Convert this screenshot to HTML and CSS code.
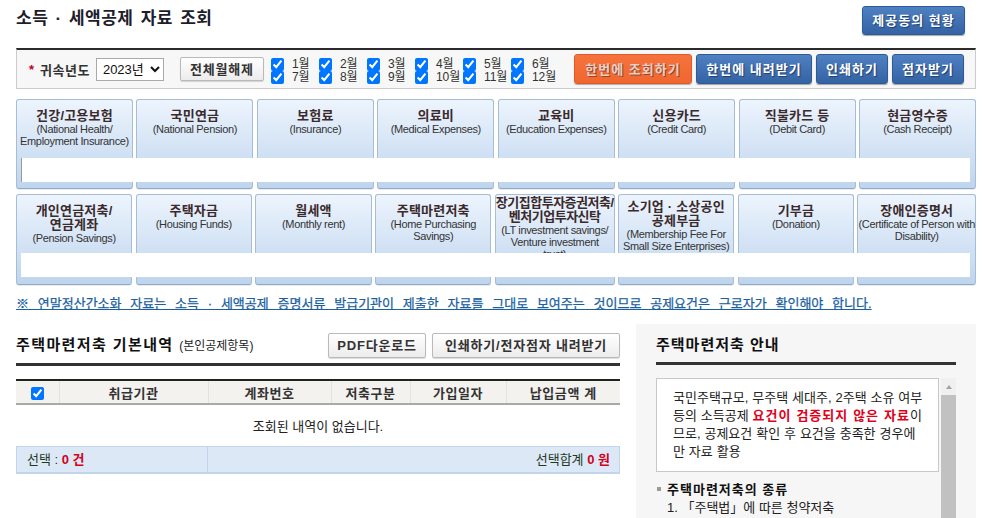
FILE: index.html
```html
<!DOCTYPE html>
<html lang="ko">
<head>
<meta charset="utf-8">
<title>소득 · 세액공제 자료 조회</title>
<link rel="stylesheet" href="styles.css">
</head>
<body>
<div class="page">
  <header class="top">
    <h1 class="title">소득 · 세액공제 자료 조회</h1>
    <button class="btn btn-blue btn-consent">제공동의 현황</button>
  </header>

  <section class="filter">
    <span class="req">*</span>
    <span class="filter-label">귀속년도</span>
    <select class="year"><option>2023년</option></select>
    <button class="btn btn-plain btn-clear">전체월해제</button>
    <div class="months">
      <label class="month"><input type="checkbox" checked><span>1월</span></label>
      <label class="month"><input type="checkbox" checked><span>2월</span></label>
      <label class="month"><input type="checkbox" checked><span>3월</span></label>
      <label class="month"><input type="checkbox" checked><span>4월</span></label>
      <label class="month"><input type="checkbox" checked><span>5월</span></label>
      <label class="month"><input type="checkbox" checked><span>6월</span></label>
      <label class="month"><input type="checkbox" checked><span>7월</span></label>
      <label class="month"><input type="checkbox" checked><span>8월</span></label>
      <label class="month"><input type="checkbox" checked><span>9월</span></label>
      <label class="month"><input type="checkbox" checked><span>10월</span></label>
      <label class="month"><input type="checkbox" checked><span>11월</span></label>
      <label class="month"><input type="checkbox" checked><span>12월</span></label>
    </div>
    <div class="actions">
      <button class="btn btn-orange w118">한번에 조회하기</button>
      <button class="btn btn-blue w116">한번에 내려받기</button>
      <button class="btn btn-blue w72">인쇄하기</button>
      <button class="btn btn-blue w72">점자받기</button>
    </div>
  </section>

  <div class="tab-row row1">
    <div class="tab"><strong>건강/고용보험</strong><span>(National Health/<br>Employment Insurance)</span></div>
    <div class="tab"><strong>국민연금</strong><span>(National Pension)</span></div>
    <div class="tab"><strong>보험료</strong><span>(Insurance)</span></div>
    <div class="tab"><strong>의료비</strong><span>(Medical Expenses)</span></div>
    <div class="tab"><strong>교육비</strong><span>(Education Expenses)</span></div>
    <div class="tab"><strong>신용카드</strong><span>(Credit Card)</span></div>
    <div class="tab"><strong>직불카드 등</strong><span>(Debit Card)</span></div>
    <div class="tab"><strong>현금영수증</strong><span>(Cash Receipt)</span></div>
    <div class="tab-bar bar-first"></div>
  </div>

  <div class="tab-row row2">
    <div class="tab"><strong>개인연금저축/<br>연금계좌</strong><span>(Pension Savings)</span></div>
    <div class="tab"><strong>주택자금</strong><span>(Housing Funds)</span></div>
    <div class="tab"><strong>월세액</strong><span>(Monthly rent)</span></div>
    <div class="tab"><strong>주택마련저축</strong><span>(Home Purchasing<br>Savings)</span></div>
    <div class="tab tab-five"><strong class="tight">장기집합투자증권저축/<br>벤처기업투자신탁</strong><span>(LT investment savings/<br>Venture investment<br>trust)</span></div>
    <div class="tab tab-four"><strong>소기업 · 소상공인<br>공제부금</strong><span>(Membership Fee For<br>Small Size Enterprises)</span></div>
    <div class="tab"><strong>기부금</strong><span>(Donation)</span></div>
    <div class="tab"><strong>장애인증명서</strong><span>(Certificate of Person with<br>Disability)</span></div>
    <div class="tab-bar"></div>
  </div>

  <p class="notice"><a href="#">※ 연말정산간소화 자료는 소득 · 세액공제 증명서류 발급기관이 제출한 자료를 그대로 보여주는 것이므로 공제요건은 근로자가 확인해야 합니다.</a></p>

  <div class="bottom">
    <section class="detail">
      <div class="detail-head">
        <h2>주택마련저축 기본내역 <small>(본인공제항목)</small></h2>
        <div class="head-btns">
          <button class="btn btn-plain w98">PDF다운로드</button>
          <button class="btn btn-plain w188">인쇄하기/전자점자 내려받기</button>
        </div>
      </div>
      <table class="grid">
        <colgroup>
          <col class="c1"><col class="c2"><col class="c3"><col class="c4"><col class="c5"><col class="c6">
        </colgroup>
        <thead>
          <tr>
            <th><input type="checkbox" checked></th>
            <th>취급기관</th>
            <th>계좌번호</th>
            <th>저축구분</th>
            <th>가입일자</th>
            <th>납입금액 계</th>
          </tr>
        </thead>
        <tbody>
          <tr><td colspan="6" class="empty">조회된 내역이 없습니다.</td></tr>
        </tbody>
      </table>
      <div class="summary">
        <div class="sum-left">선택 : <b>0 건</b></div>
        <div class="sum-right">선택합계 <b>0 원</b></div>
      </div>
    </section>

    <aside class="guide">
      <h3>주택마련저축 안내</h3>
      <div class="guide-scroll">
        <div class="guide-inner">
          <div class="guide-box">국민주택규모, 무주택 세대주, 2주택 소유 여부<br>등의 소득공제 <em>요건이 검증되지 않은 자료</em>이<br>므로, 공제요건 확인 후 요건을 충족한 경우에<br>만 자료 활용</div>
          <h4 class="guide-head">주택마련저축의 종류</h4>
          <p class="guide-item">1. 「주택법」에 따른 청약저축</p>
        </div>
        <div class="scrollbar">
          <div class="sb-up"><span class="sb-arrow"></span></div>
          <div class="sb-thumb"></div>
        </div>
      </div>
    </aside>
  </div>
</div>
</body>
</html>
```

FILE: styles.css
```css
* { box-sizing: border-box; }

html, body {
  margin: 0;
  padding: 0;
  background: #fff;
}

body {
  font-family: "Liberation Sans", "Noto Sans CJK KR", sans-serif;
  font-size: 13px;
  color: #222;
}

.page {
  width: 960px;
  margin-left: 16px;
}

/* header */
.top {
  display: flex;
  justify-content: space-between;
  align-items: flex-start;
  height: 48px;
}

.title {
  margin: 0;
  padding-top: 9px;
  font-size: 17px;
  line-height: 20px;
  font-weight: bold;
  letter-spacing: 0.5px;
  word-spacing: 2px;
  color: #1d1d2c;
}

/* buttons */
.btn {
  font-family: "Liberation Sans", "Noto Sans CJK KR", sans-serif;
  font-size: 13px;
  font-weight: bold;
  padding: 0;
  line-height: 1;
  cursor: pointer;
  white-space: nowrap;
}

.btn-blue {
  background: linear-gradient(#4f80c2, #3463a4);
  border: 1px solid #2d5b97;
  border-radius: 3px;
  color: #fff;
  letter-spacing: 1px;
  text-shadow: 1px 1px 1px #1c3d6e;
  box-shadow: 0 1px 1px rgba(0, 0, 0, 0.35);
}

.btn-orange {
  background: linear-gradient(#f6733d, #ef6630);
  border: 1px solid #e05a25;
  border-radius: 3px;
  color: #e6cfc5;
  letter-spacing: 1px;
  text-shadow: 1px 1px 0 #9b4426;
  box-shadow: 0 1px 1px rgba(0, 0, 0, 0.3);
}

.btn-plain {
  background: linear-gradient(#ffffff, #ececec);
  border: 1px solid #b9b9b9;
  border-radius: 2px;
  color: #333;
  letter-spacing: 0.8px;
  box-shadow: 0 1px 1px rgba(0, 0, 0, 0.15);
}

.btn-consent {
  margin-top: 6px;
  margin-right: 11px;
  width: 103px;
  height: 29px;
}

.w118 { width: 118px; height: 30px; }
.w116 { width: 116px; height: 30px; }
.w72 { width: 72px; height: 30px; }
.w98 { width: 98px; height: 25px; }
.w188 { width: 188px; height: 25px; }

/* filter */
.filter {
  display: flex;
  align-items: center;
  height: 41px;
  border: 1px solid #cccccc;
  border-top: 2px solid #2b2b2b;
  background: #f7f7f7;
  padding: 0 11px 0 12px;
}

.req {
  color: #c4001c;
  font-weight: bold;
  font-size: 13px;
  margin-right: 6px;
}

.filter-label {
  font-weight: bold;
  font-size: 13px;
  letter-spacing: 0.5px;
  color: #333;
  margin-right: 6px;
}

.year {
  width: 68px;
  height: 23px;
  font-family: "Liberation Sans", "Noto Sans CJK KR", sans-serif;
  font-size: 13px;
  color: #111;
  background: #fff;
  border: 1px solid #a9a9a9;
  border-radius: 0;
  padding: 0 0 0 2px;
  margin-right: 16px;
}

.btn-clear {
  width: 84px;
  height: 24px;
  margin-right: 7px;
}

.months {
  display: grid;
  grid-template-columns: repeat(6, 48px);
  grid-auto-rows: 13px;
  margin-top: 3px;
}

.month {
  display: flex;
  align-items: center;
  height: 13px;
}

.month input {
  margin: 0 8px 0 0;
  width: 13px;
  height: 13px;
}

.month span {
  font-size: 12px;
  line-height: 13px;
  color: #333;
}

.actions {
  margin-left: auto;
  display: flex;
  gap: 4px;
}

/* tabs */
.tab-row {
  position: relative;
  display: grid;
  grid-template-columns: repeat(8, 1fr);
  column-gap: 3.5px;
}

.row1 { height: 90px; margin-top: 10px; }
.row2 { height: 91px; margin-top: 5px; }

.tab {
  border: 1px solid #a6bdd7;
  border-bottom-color: #8ea9c8;
  border-radius: 3px;
  background: linear-gradient(#edf4fd, #bed5ee);
  text-align: center;
  padding-top: 9px;
  white-space: nowrap;
  box-shadow: 0 1px 0 rgba(0, 0, 0, 0.08);
}

.tab strong {
  display: block;
  font-size: 13px;
  line-height: 14px;
  font-weight: bold;
  letter-spacing: 0.2px;
  color: #3a2a2c;
}

.tab strong.tight { letter-spacing: -0.5px; }

.tab span {
  display: block;
  font-size: 11px;
  line-height: 12px;
  color: #333;
  letter-spacing: -0.35px;
}

.tab-four { padding-top: 5px; }
.tab-five { padding-top: 1px; }

.tab-bar {
  position: absolute;
  left: 5px;
  right: 6px;
  top: 59px;
  height: 24px;
  background: #fff;
}

.bar-first { border-left: 1px solid #9a9a9a; }

/* notice */
.notice {
  margin: 12px 0 0;
  font-size: 13px;
  line-height: 14px;
  font-weight: normal;
  word-spacing: 5.2px;
}

.notice a {
  color: #1b5f9f;
  text-decoration: underline;
  -webkit-text-stroke: 0.25px #1b5f9f;
}

/* bottom */
.bottom {
  display: flex;
  gap: 16px;
  margin-top: 13px;
}

.detail {
  width: 604px;
  padding-top: 9px;
}

.detail-head {
  display: flex;
  justify-content: space-between;
  align-items: center;
  padding-bottom: 5px;
  border-bottom: 3px solid #333;
}

.detail-head h2 {
  margin: 0;
  font-size: 15px;
  line-height: 20px;
  font-weight: bold;
  letter-spacing: 1.4px;
  color: #111;
}

.detail-head small {
  font-size: 12px;
  font-weight: normal;
  letter-spacing: 0;
  color: #222;
}

.head-btns {
  display: flex;
  gap: 6px;
}

.grid {
  width: 604px;
  margin-top: 13px;
  border-collapse: collapse;
  table-layout: fixed;
}

.c1 { width: 43px; }
.c2 { width: 149px; }
.c3 { width: 123px; }
.c4 { width: 79px; }
.c5 { width: 96px; }
.c6 { width: 114px; }

.grid th {
  height: 24px;
  padding: 0;
  background: #f3f2ef;
  border-top: 2px solid #222;
  border-bottom: 2px solid #a9a9a9;
  border-left: 1px solid #e4e2de;
  font-size: 13px;
  font-weight: bold;
  letter-spacing: 0.6px;
  color: #333;
  text-align: center;
  vertical-align: middle;
}

.grid th:first-child { border-left: 0; }

.grid th input {
  margin: 0;
  width: 13px;
  height: 13px;
  vertical-align: middle;
}

.grid td.empty {
  height: 42px;
  padding: 0;
  text-align: center;
  font-size: 13px;
  color: #222;
}

.summary {
  display: flex;
  height: 28px;
  background: #dde8f7;
  border: 1px solid #c2d5ec;
  border-bottom-width: 2px;
  font-size: 13px;
  line-height: 25px;
  color: #1f3a1f;
}

.sum-left {
  width: 191px;
  padding-left: 10px;
  border-right: 1px solid #c2d5ec;
}

.sum-right {
  flex: 1;
  text-align: right;
  padding-right: 9px;
}

.summary b {
  color: #d0021b;
  font-weight: bold;
}

/* guide */
.guide {
  width: 340px;
  background: #f6f6f6;
  padding: 10px 20px 0;
}

.guide h3 {
  margin: 0;
  font-size: 15px;
  line-height: 22px;
  padding-bottom: 6px;
  border-bottom: 3px solid #333;
  font-weight: bold;
  letter-spacing: 1px;
  color: #111;
}

.guide-scroll {
  display: flex;
  margin-top: 13px;
  height: 200px;
}

.guide-inner {
  width: 285px;
  padding-right: 2px;
  overflow: hidden;
}

.scrollbar {
  width: 15px;
  display: flex;
  flex-direction: column;
  background: #f0f0f0;
}

.sb-up {
  height: 17px;
  display: flex;
  align-items: center;
  justify-content: center;
}

.sb-arrow {
  width: 0;
  height: 0;
  border-left: 3.5px solid transparent;
  border-right: 3.5px solid transparent;
  border-bottom: 4px solid #a3a3a3;
}

.sb-thumb {
  flex: 1;
  background: #c1c1c1;
}

.guide-box {
  background: #fff;
  border: 1px solid #c8c8c8;
  padding: 10px 4px 10px 16px;
  font-size: 13px;
  line-height: 18px;
  color: #222;
  white-space: nowrap;
  word-spacing: 0.3px;
}

.guide-box em {
  font-style: normal;
  font-weight: bold;
  letter-spacing: 1px;
  color: #e0001b;
}

.guide-head {
  margin: 9px 0 0;
  font-size: 13px;
  line-height: 18px;
  font-weight: bold;
  letter-spacing: 1px;
  color: #111;
}

.guide-head::before {
  content: "";
  display: inline-block;
  width: 4px;
  height: 4px;
  background: #9a9a9a;
  margin: 0 6px 3px 1px;
  vertical-align: middle;
}

.guide-item {
  margin: 0;
  padding-left: 11px;
  font-size: 13px;
  line-height: 18px;
  color: #222;
}
```
